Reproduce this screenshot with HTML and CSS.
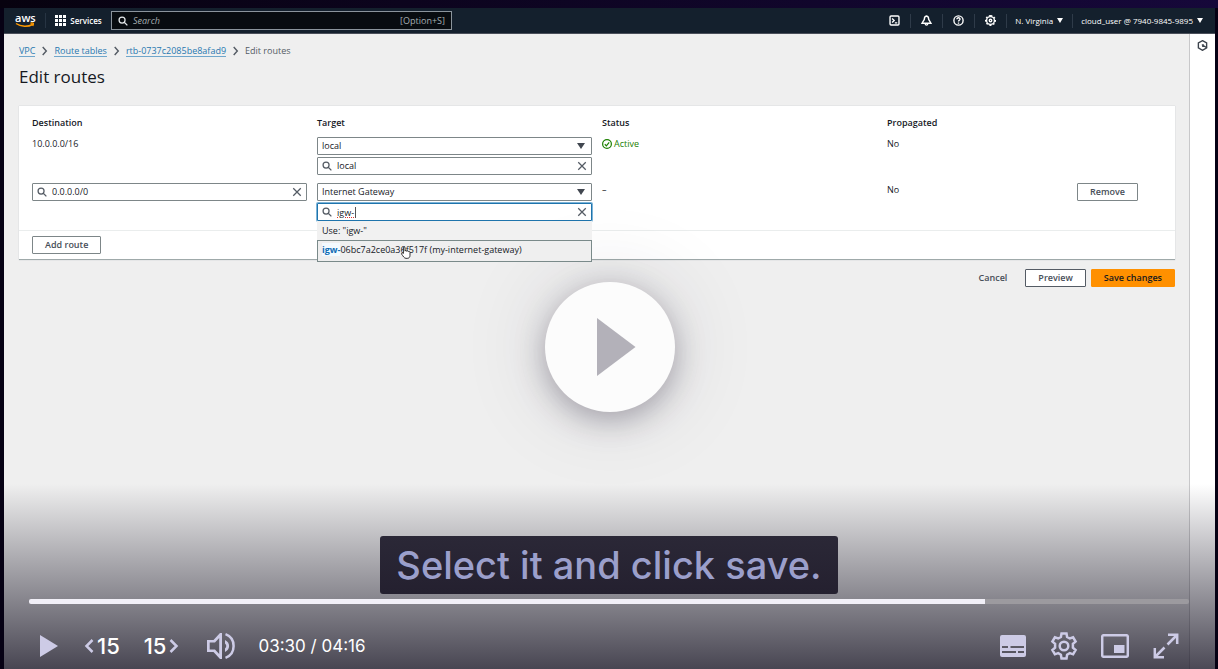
FILE: index.html
```
<!DOCTYPE html>
<html lang="en">
<head>
<meta charset="utf-8">
<title>Edit routes</title>
<link rel="stylesheet" href="styles.css">
</head>
<body>
<svg class="sprite" aria-hidden="true">
  <symbol id="search" viewBox="0 0 16 16"><circle cx="6.5" cy="6.5" r="4.8"/><path d="M10 10l5 5"/></symbol>
  <symbol id="close" viewBox="0 0 16 16"><path d="M2 2l12 12M14 2L2 14"/></symbol>
  <symbol id="chevron" viewBox="0 0 8 14"><path d="M1.500 1.500L6.500 7l-5 5.500"/></symbol>
</svg>
<div class="player">
  <div class="console">
    <header class="topbar">
      <a class="logo" href="#" aria-label="aws">
        <span>aws</span>
        <svg viewBox="0 0 20 6"><path d="M1 1.500c5 3.500 12 3.500 16.500 1M15.500 1.200c3-.6 3.500-.1 2.200 2.600"/></svg>
      </a>
      <button class="services"><svg viewBox="0 0 11 11"><path d="M0 0h3v3H0zM4 0h3v3H4zM8 0h3v3H8zM0 4h3v3H0zM4 4h3v3H4zM8 4h3v3H8zM0 8h3v3H0zM4 8h3v3H4zM8 8h3v3H8z"/></svg>Services</button>
      <label class="search"><svg class="icon"><use href="#search"/></svg><input type="text" placeholder="Search" aria-label="Search"><span>[Option+S]</span></label>
      <nav class="tools">
        <button aria-label="CloudShell"><svg viewBox="0 0 16 16"><rect x="1.500" y="1.500" width="13" height="13" rx="1.500"/><path d="M4.500 5l3 3-3 3M8.500 11.500H12"/></svg></button>
        <button aria-label="Notifications"><svg viewBox="0 0 16 16"><path d="M8 1.500C5.500 2 4.800 4 4.800 6.500L1.500 12h13l-3.300-5.500C11.200 4 10.500 2 8 1.500zM6 12.500c.5 3 3.500 3 4 0"/></svg></button>
        <button aria-label="Help"><svg viewBox="0 0 16 16"><circle cx="8" cy="8" r="6.700"/><path d="M5.700 6.300C5.800 3 10.500 3.500 10.200 6.200 10 7.700 8 7.700 8 9.500M8 11v1.700"/></svg></button>
        <button aria-label="Settings"><svg viewBox="0 0 16 16"><circle cx="8" cy="8" r="5.700"/><circle cx="8" cy="8" r="1.800"/><path stroke-dasharray="2.600 2.480" d="M8 1a7 7 0 1 1-.01 0"/></svg></button>
        <button class="wide">N. Virginia <i class="caret"></i></button>
        <button class="wide">cloud_user @ 7940-9845-9895 <i class="caret"></i></button>
      </nav>
    </header>
    <div class="body">
      <main class="page">
        <nav class="crumbs">
          <a href="#">VPC</a><svg><use href="#chevron"/></svg>
          <a href="#">Route tables</a><svg><use href="#chevron"/></svg>
          <a href="#">rtb-0737c2085be8afad9</a><svg><use href="#chevron"/></svg>
          <span>Edit routes</span>
        </nav>
        <h1>Edit routes</h1>
        <section class="card">
          <table class="routes">
            <thead><tr><th class="c3">Destination</th><th class="c3">Target</th><th class="c3">Status</th><th class="c2">Propagated</th><th class="c1" aria-label="Actions"></th></tr></thead>
            <tbody>
              <tr>
                <td><p>10.0.0.0/16</p></td>
                <td>
                  <div class="stack">
                    <div class="pick"><select aria-label="Target type"><option>local</option></select><i class="caret"></i></div>
                    <div class="field"><svg class="icon"><use href="#search"/></svg><input type="text" value="local" aria-label="Target"><button aria-label="Clear"><svg class="icon"><use href="#close"/></svg></button></div>
                  </div>
                </td>
                <td><p class="active"><svg viewBox="0 0 16 16"><circle cx="8" cy="8" r="7"/><path d="M4.500 8.500L7 11l4.500-5.500"/></svg>Active</p></td>
                <td><p>No</p></td>
                <td></td>
              </tr>
              <tr>
                <td><div class="field"><svg class="icon"><use href="#search"/></svg><input type="text" value="0.0.0.0/0" aria-label="Destination"><button aria-label="Clear"><svg class="icon"><use href="#close"/></svg></button></div></td>
                <td>
                  <div class="stack">
                    <div class="pick"><select aria-label="Target type"><option>Internet Gateway</option></select><i class="caret"></i></div>
                    <div class="field focused"><svg class="icon"><use href="#search"/></svg><input class="misspelt" type="text" value="igw-" aria-label="Target"><button aria-label="Clear"><svg class="icon"><use href="#close"/></svg></button><i class="beam"></i>
                      <ul class="menu">
                        <li>Use: "igw-"</li>
                        <li class="hover"><b>igw-</b>06bc7a2ce0a36f517f (my-internet-gateway)
                          <svg class="hand" viewBox="0 0 12 14"><path d="M3.200 8V2c0-1.300 1.800-1.300 1.800 0v3.500c.3-1 1.700-.8 1.800.2.400-.9 1.700-.6 1.800.4.500-.7 1.700-.4 1.700.6V10c0 2-1 3.300-3 3.300H6C4 13.300 3 11 1.300 8.800.600 7.700 1.900 6.900 3.200 8z"/></svg></li>
                      </ul>
                    </div>
                  </div>
                </td>
                <td><p>–</p></td>
                <td><p>No</p></td>
                <td><button class="btn">Remove</button></td>
              </tr>
            </tbody>
          </table>
          <footer><button class="btn">Add route</button></footer>
        </section>
        <div class="actions"><button class="btn link">Cancel</button><button class="btn dark">Preview</button><button class="btn primary">Save changes</button></div>
      </main>
      <aside class="rail"><button aria-label="Open panel"><svg viewBox="0 0 16 16"><path d="M8 1l6 3.300v7L8 15l-6-3.700v-7z"/><path d="M7 7h3M7.500 9h4M11.500 9.500l3 1.500"/></svg></button></aside>
    </div>
  </div>

  <div class="center">
    <button class="bigplay" aria-label="Play"><svg viewBox="0 0 40 60"><path d="M1 1l38.500 29L1 59z"/></svg></button>
  </div>

  <div class="overlay">
    <p class="caption">Select it and click save.</p>
    <input class="progress" type="range" min="0" max="256" value="211" aria-label="Seek">
    <div class="controls">
      <button class="c-play" aria-label="Play"><svg viewBox="0 0 18 24" width="18" height="24"><path d="M0 1l18 11L0 23z"/></svg></button>
      <button class="skip" aria-label="Back 15 seconds"><svg viewBox="0 0 10 16" width="10" height="16"><path d="M8.500 2l-6 6 6 6"/></svg>15</button>
      <button class="skip" aria-label="Forward 15 seconds">15<svg viewBox="0 0 10 16" width="10" height="16"><path d="M1.500 2l6 6-6 6"/></svg></button>
      <button class="volume" aria-label="Volume"><svg viewBox="0 0 28 28" width="28" height="28"><path fill-rule="evenodd" d="M15 1v26h-2L6.500 20H0V8h6.500L13 1zM12.200 6L8 10.500H2.700v7H8l4.200 4.500z"/><path class="wave" d="M18.500 2.200c10.800 4 10.800 19.600 0 23.600"/><path d="M18 8c5.500 2.500 5.500 9.500 0 12v-3.500c1.700-1.500 1.700-3.500 0-5z"/></svg></button>
      <span class="time">03:30 / 04:16</span>
      <div class="right">
        <button aria-label="Captions"><svg viewBox="0 0 26 22" width="26" height="22"><path fill-rule="evenodd" d="M2 0h22a2 2 0 0 1 2 2v18a2 2 0 0 1-2 2H2a2 2 0 0 1-2-2V2a2 2 0 0 1 2-2zM2 11v2h6v-2zM10.500 11v2H24v-2zM2 16v2h14v-2zM18 16v2h6v-2z"/></svg></button>
        <button aria-label="Settings"><svg class="gear" viewBox="0 0 28 28" width="28" height="28"><path d="M11.500 1.500h5l.6 3.500 2.700 1.500 3.300-1.200 2.500 4.300-2.700 2.300v3.800l2.700 2.300-2.500 4.300-3.300-1.200-2.700 1.600-.6 3.800h-5l-.6-3.800-2.700-1.600-3.300 1.200L2.400 18l2.700-2.300v-3.800L2.400 9.600l2.500-4.300 3.300 1.200L10.900 5z"/><circle cx="14" cy="14" r="4.300"/></svg></button>
        <button aria-label="Picture in picture"><svg viewBox="0 0 28 24" width="28" height="24"><rect class="line" x="1.200" y="1.200" width="25.600" height="21.600" rx="1.500"/><path d="M13 11h10.500v8H13z"/></svg></button>
        <button aria-label="Full screen"><svg viewBox="0 0 26 26" width="26" height="26"><path class="line" d="M15 1.800h9.200V11M24 2l-9.500 9.500M11 24.200H1.800V15M2 24l9.500-9.500"/></svg></button>
      </div>
    </div>
  </div>
</div>
</body>
</html>
```

FILE: styles.css
```
* { box-sizing: border-box; }
body {
  margin: 0;
  background: linear-gradient(90deg, #07020f, #16083a) top / 100% 8px no-repeat #060114;
  font: 500 9px/12px "Open Sans", "Noto Sans", sans-serif;
  color: #16191f;
}
button, input, select { font: inherit; color: inherit; margin: 0; padding: 0; border: 0; background: none; border-radius: 0; outline: 0; }
button { cursor: pointer; display: flex; align-items: center; justify-content: center; white-space: nowrap; }
svg { display: block; fill: none; stroke: currentColor; flex: none; }
p, h1, ul { margin: 0; padding: 0; }
.sprite { display: none; }
.icon { width: 10px; height: 10px; color: #545b64; stroke-width: 2; }
.caret { flex: none; width: 0; height: 0; border: solid transparent; border-width: 6px 4px 0; border-top-color: currentColor; }

.player { position: relative; min-height: 100vh; padding: 8px 3px 0 4px; display: flex; }
.console { flex: 1; display: flex; flex-direction: column; background: #efefef; }

.topbar { height: 26px; display: flex; align-items: center; background: #14202d; border-bottom: 1px solid #4a4f5a; color: #fff; font-size: 8px; font-weight: 600; }
.logo { width: 42px; height: 15px; padding-left: 11px; border-right: 1px solid #273443; color: #fff; text-decoration: none; font-size: 11px; line-height: 9px; }
.logo span { display: block; }
.logo svg { width: 20px; height: 6px; color: #f90; stroke-width: 1.500; }
.services { width: 65px; gap: 4px; }
.services svg { width: 11px; height: 11px; fill: #fff; stroke: none; }
.search { width: 341px; height: 19px; display: flex; align-items: center; gap: 5px; padding: 0 6px; background: #080c10; border: 1px solid #8b949c; color: #a5aeb0; font-size: 9px; font-weight: 400; }
.search .icon { color: #e4e8ea; }
.search input { flex: 1; min-width: 0; }
.search input::placeholder { color: #a5aeb0; font-style: italic; opacity: 1; }
.tools { display: flex; margin-left: auto; }
.tools button { width: 32px; height: 14px; border-left: 1px solid #2f3b49; }
.tools button:first-child { border: 0; }
.tools svg { width: 11px; height: 11px; stroke-width: 2; }
.tools .wide { width: auto; gap: 4px; padding: 0 9px 0 8px; font-weight: 500; }
.tools .wide:last-child { padding: 0 12px 0 8px; }
.tools .caret { border-width: 5px 3px 0; }

.body { flex: 1; display: flex; }
.page { flex: 1; padding: 11px 14px 0 15px; }
.rail { width: 26px; padding-top: 6px; background: #fff; border-left: 1px solid #c8c8ca; display: flex; justify-content: center; align-items: flex-start; color: #3c434c; }
.rail svg { width: 11px; height: 11px; stroke-width: 2; }

.crumbs { display: flex; align-items: center; gap: 6px; height: 12px; color: #545b64; }
.crumbs a { color: #2878b0; text-decoration: none; border-bottom: 1px solid #6fa6cb; line-height: 11px; }
.crumbs svg { width: 7px; height: 10px; stroke-width: 2; }
h1 { margin: 9px 0 19px; font-size: 17px; line-height: 21px; font-weight: 500; }

.card { background: #fff; border-bottom: 1px solid #9fa9aa; box-shadow: 0 0 1px #b8bec0; }
.routes { width: calc(100% - 16px); margin: 0 3px 0 13px; border-collapse: collapse; table-layout: fixed; }
.c3 { width: 25%; }
.c2 { width: 16.670%; }
.c1 { width: 8.330%; }
.routes th { height: 31px; padding: 11px 10px 8px 0; text-align: left; vertical-align: top; font-weight: 600; }
.routes td { height: 46px; padding: 0 10px 0 0; vertical-align: top; }
.routes tr:last-child td { height: 47px; }
.routes td p { padding-top: 1px; }
.routes .active { display: flex; align-items: center; gap: 2px; color: #1d8102; }
.active svg { width: 10px; height: 10px; stroke-width: 2; }
.stack { display: flex; flex-direction: column; gap: 2px; }
.field, .pick { position: relative; height: 18px; display: flex; align-items: center; border: 1px solid #7d8688; border-radius: 1px; background: #fff; }
.field { gap: 5px; padding: 0 4px; }
.field input { flex: 1; min-width: 0; }
.pick select { flex: 1; appearance: none; height: 16px; padding-left: 4px; }
.pick .caret { position: absolute; right: 6px; color: #414750; pointer-events: none; }
.focused { border-color: #1f74ac; box-shadow: 0 0 0 1px #7db4d8; }
.field .misspelt { height: 16px; text-decoration: underline dotted #d33 1px; text-underline-offset: 1px; }
.beam { position: absolute; left: 37px; width: 1px; height: 11px; background: #555; }
.menu { position: absolute; z-index: 1; top: 17px; left: -1px; right: -1px; list-style: none; background: #f1f1f1; }
.menu li { height: 19px; padding: 4px 5px; line-height: 12px; white-space: nowrap; }
.menu .hover { position: relative; height: 22px; padding: 3px 4px; border: 1px solid #7a8a8a; background: #efefef; }
.menu b { color: #0f6db5; font-weight: 700; background: #f3faff; }
.hand { position: absolute; left: 82px; top: 5px; width: 12px; height: 13px; color: #222; fill: #fff; stroke-width: 1; }
.card footer { padding: 5px 13px; border-top: 1px solid #eaeded; }

.btn { height: 18px; padding: 0 12px; border: 1px solid #7d8688; border-radius: 1px; background: #fff; color: #474e58; font-weight: 600; }
.actions { display: flex; justify-content: flex-end; gap: 5px; margin-top: 9px; }
.btn.dark { border-color: #545b64; }
.btn.link { border-color: transparent; background: none; }
.btn.primary { border-color: #ff9000; background: #ff9000; color: #16191f; }

.center { position: absolute; inset: 25px 0 0 1px; display: flex; align-items: center; justify-content: center; pointer-events: none; }
.bigplay { width: 130px; height: 130px; border-radius: 50%; background: #fcfcfc; box-shadow: 0 8px 30px rgba(40, 34, 60, .34), 0 0 90px rgba(40, 34, 60, .14); pointer-events: auto; }
.bigplay svg { width: 40px; height: 60px; margin-left: 12px; fill: #b3b1b9; stroke: none; }

.overlay { position: absolute; left: 4px; right: 3px; bottom: 0; padding: 52px 26px 0 25px; display: flex; flex-direction: column; background: linear-gradient(rgba(25, 22, 38, 0), rgba(25, 22, 38, .78)); color: #cdcbe6; }
.caption { align-self: center; height: 58px; padding: 0 16px; border-radius: 3px; background: linear-gradient(#2b2837, #24202f); color: #9b9fcb; font: 500 38px/58px Inter, sans-serif; white-space: nowrap; }
.progress { appearance: none; width: 100%; height: 5px; margin: 5px 0 19px; border-radius: 2px; background: linear-gradient(90deg, #f1eff7 82.400%, #9c9a9f 82.400%); }
.progress::-webkit-slider-thumb { appearance: none; width: 1px; height: 1px; opacity: 0; }
.controls { height: 46px; display: flex; align-items: center; padding-left: 11px; font-family: Inter, sans-serif; }
.controls svg { fill: currentColor; stroke: none; }
.controls .skip { margin-left: 26px; gap: 3px; color: #fff; font-size: 22px; line-height: 26px; }
.controls .skip + .skip { margin-left: 24px; }
.controls .skip svg, .controls .wave, .controls .line, .controls .gear { fill: none; stroke: #cdcbe6; stroke-width: 2.500; }
.volume { margin-left: 28px; }
.time { margin-left: 23px; color: #fff; font-size: 17px; line-height: 24px; font-weight: 400; }
.right { display: flex; gap: 5px; margin-left: auto; }
.right button { width: 46px; height: 46px; }
```
